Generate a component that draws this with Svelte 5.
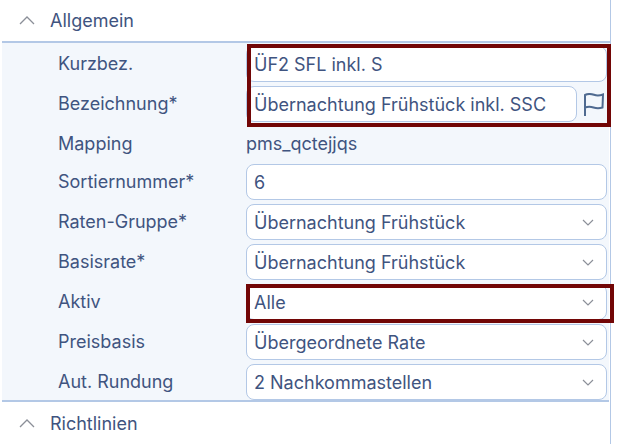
<script>
    const rows = [
        { label: "Kurzbez.", type: "input", value: "ÜF2 SFL inkl. S" },
        { label: "Bezeichnung*", type: "flag", value: "Übernachtung Frühstück inkl. SSC" },
        { label: "Mapping", type: "text", value: "pms_qctejjqs" },
        { label: "Sortiernummer*", type: "input", value: "6" },
        { label: "Raten-Gruppe*", type: "select", value: "Übernachtung Frühstück" },
        { label: "Basisrate*", type: "select", value: "Übernachtung Frühstück" },
        { label: "Aktiv", type: "select", value: "Alle" },
        { label: "Preisbasis", type: "select", value: "Übergeordnete Rate" },
        { label: "Aut. Rundung", type: "select", value: "2 Nachkommastellen" }
    ];
</script>

<div class="panel">
    <div class="section-head open">
        <svg class="caret" width="16" height="9" viewBox="0 0 16 9"><path d="M1 8 L8 1 L15 8" /></svg>
        <span>Allgemein</span>
    </div>
    <div class="section-body">
        {#each rows as row}
            <div class="row" class:text-row={row.type === "text"}>
                <div class="label">{row.label}</div>
                {#if row.type === "text"}
                    <div class="plain">{row.value}</div>
                {:else if row.type === "flag"}
                    <div class="with-flag">
                        <div class="field">{row.value}</div>
                        <svg class="flag" width="20" height="23" viewBox="0 0 20 23">
                            <path d="M1 23 V2 C4 0.5 7 0.800 10 1.800 C13 2.800 16 2.500 19 1.500 L18.500 14.500 C15.500 15.500 12.500 15.500 9.500 14.500 C6.500 13.500 4 13.500 1 14.500" />
                        </svg>
                    </div>
                {:else}
                    <div class="field">
                        <span>{row.value}</span>
                        {#if row.type === "select"}
                            <svg class="chevron" width="12" height="7" viewBox="0 0 12 7"><path d="M1 1 L6 6 L11 1" /></svg>
                        {/if}
                    </div>
                {/if}
            </div>
        {/each}
    </div>
    <div class="section-head">
        <svg class="caret" width="16" height="9" viewBox="0 0 16 9"><path d="M1 8 L8 1 L15 8" /></svg>
        <span>Richtlinien</span>
    </div>
    <div class="mark mark-top"></div>
    <div class="mark mark-aktiv"></div>
</div>

<style>
    :global(body) {
        background: #fff;
        font-family: Inter, "Liberation Sans", sans-serif;
    }
    .panel {
        position: relative;
        box-sizing: border-box;
        width: 611px;
        height: 444px;
        padding-left: 2px;
        border-right: 1px solid #b3c8e6;
        color: #3f5480;
        font-size: 18px;
    }
    .section-head {
        display: flex;
        align-items: center;
        gap: 15px;
        height: 43px;
        padding-left: 17px;
        box-sizing: border-box;
    }
    .section-head.open {
        border-bottom: 2px solid #b3c8e6;
    }
    .caret path {
        fill: none;
        stroke: #8b8f98;
        stroke-width: 1.3;
    }
    .section-body {
        box-sizing: border-box;
        display: flex;
        flex-direction: column;
        gap: 4px;
        background: #f3f7fc;
        border-bottom: 2px solid #b3c8e6;
        margin-right: 1px;
        padding-top: 3px;
        height: 359px;
    }
    .row {
        display: grid;
        grid-template-columns: 188px 361px;
        padding-left: 56px;
        height: 36px;
        align-items: center;
    }
    .row.text-row {
        height: 34px;
    }
    .label {
        line-height: 36px;
        margin-top: -1px;
    }
    .plain {
        line-height: 36px;
    }
    .field {
        box-sizing: border-box;
        display: flex;
        align-items: center;
        justify-content: space-between;
        height: 36px;
        padding: 0 12px 0 7px;
        background: #fff;
        border: 1px solid #b3c8e6;
        border-radius: 8px;
    }
    .with-flag {
        display: flex;
        align-items: center;
        gap: 7px;
    }
    .with-flag .field {
        width: 331px;
    }
    .flag path {
        fill: none;
        stroke: #4f6a90;
        stroke-width: 2;
    }
    .chevron path {
        fill: none;
        stroke: #8b8f98;
        stroke-width: 1.2;
    }
    .mark {
        position: absolute;
        box-sizing: border-box;
        border: 4px solid #720606;
        pointer-events: none;
    }
    .mark-top {
        left: 247px;
        top: 44px;
        width: 364px;
        height: 83px;
    }
    .mark-aktiv {
        left: 246px;
        top: 284px;
        width: 368px;
        height: 39px;
    }
</style>
